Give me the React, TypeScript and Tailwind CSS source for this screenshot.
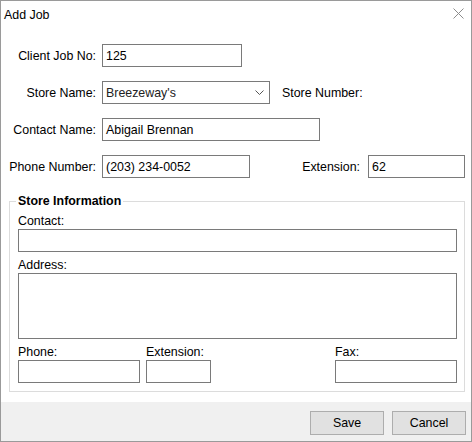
import React from 'react';

const font = { fontFamily: '"Liberation Sans", Arial, sans-serif' };

function Field({ className = '', value = '' }: { className?: string; value?: string }) {
  return (
    <div className={`h-[23px] border border-[#7a7a7a] bg-white pl-[3px] flex items-center text-black ${className}`}>
      {value}
    </div>
  );
}

export default function App() {
  return (
    <div
      className="w-[472px] h-[442px] border border-[#9a9a9a] bg-white flex flex-col text-[12.4px] text-black leading-[14px]"
      style={font}
    >
      {/* Title bar */}
      <div className="h-[30px] flex items-start pl-[3px] pr-[7px] pt-[7px] shrink-0">
        <span>Add Job</span>
        <svg className="ml-auto" width="11" height="11" viewBox="0 0 11 11">
          <path d="M0.5 0.5 L10.5 10.5 M10.5 0.5 L0.5 10.5" stroke="#8c8c8c" strokeWidth="1" fill="none" />
        </svg>
      </div>

      {/* Main form */}
      <div className="flex-1 flex flex-col">
        <div className="mt-[13px] flex items-center">
          <div className="w-[95px] text-right">Client Job No:</div>
          <Field className="ml-[6px] w-[140px]" value="125" />
        </div>

        <div className="mt-[14px] flex items-center">
          <div className="w-[95px] text-right">Store Name:</div>
          <div className="ml-[6px] w-[168px] h-[23px] border border-[#7a7a7a] bg-white pl-[3px] pr-[5px] flex items-center">
            <span className="text-[#222]">Breezeway's</span>
            <svg className="ml-auto" width="9" height="5" viewBox="0 0 9 5">
              <path d="M0.5 0.5 L4.5 4.5 L8.5 0.5" stroke="#555" strokeWidth="1" fill="none" />
            </svg>
          </div>
          <div className="ml-[12px]">Store Number:</div>
        </div>

        <div className="mt-[14px] flex items-center">
          <div className="w-[95px] text-right">Contact Name:</div>
          <Field className="ml-[6px] w-[218px]" value="Abigail Brennan" />
        </div>

        <div className="mt-[14px] flex items-center">
          <div className="w-[95px] text-right">Phone Number:</div>
          <Field className="ml-[6px] w-[148px]" value="(203) 234-0052" />
          <div className="ml-auto mr-[8px]">Extension:</div>
          <Field className="mr-[6px] w-[97px]" value="62" />
        </div>

        <fieldset className="mt-[16px] ml-[8px] mr-[6px] border border-[#dcdcdc] pl-[8px] pr-[7px] pt-[6px] pb-[8px]">
          <legend className="font-bold px-[2px] -ml-[2px] leading-[14px]">Store Information</legend>
          <div className="h-[14px]">Contact:</div>
          <Field className="mt-[1px] w-full" />
          <div className="mt-[6px] h-[14px]">Address:</div>
          <div className="mt-[1px] h-[66px] w-full border border-[#7a7a7a] bg-white" />
          <div className="mt-[6px] flex">
            <div className="w-[122px] flex flex-col">
              <div className="h-[14px]">Phone:</div>
              <Field className="mt-[1px] w-full" />
            </div>
            <div className="ml-[6px] w-[65px] flex flex-col">
              <div className="h-[14px]">Extension:</div>
              <Field className="mt-[1px] w-full" />
            </div>
            <div className="ml-auto w-[122px] flex flex-col">
              <div className="h-[14px]">Fax:</div>
              <Field className="mt-[1px] w-full" />
            </div>
          </div>
        </fieldset>
      </div>

      {/* Footer */}
      <div className="h-[39px] shrink-0 bg-[#f0f0f0] flex justify-end items-start pt-[9px] pr-[5px] gap-[8px]">
        <button className="w-[74px] h-[24px] bg-[#e1e1e1] border border-[#adadad] text-black">Save</button>
        <button className="w-[74px] h-[24px] bg-[#e1e1e1] border border-[#adadad] text-black">Cancel</button>
      </div>
    </div>
  );
}
